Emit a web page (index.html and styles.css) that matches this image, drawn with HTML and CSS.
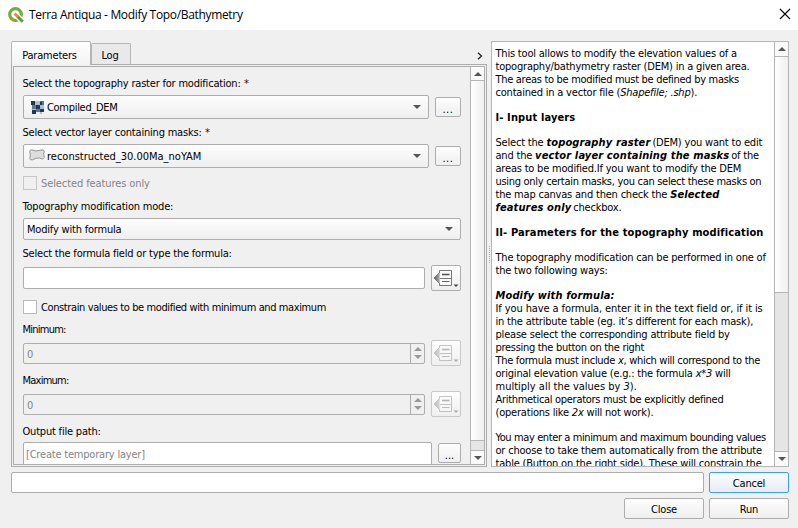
FILE: index.html
```html
<!DOCTYPE html>
<html lang="en">
<head>
<meta charset="utf-8">
<title>Terra Antiqua - Modify Topo/Bathymetry</title>
<link rel="stylesheet" href="styles.css">
</head>
<body>
<svg class="defs" aria-hidden="true">
  <defs>
    <linearGradient id="arrow" x1="0" x2="1"><stop offset="0" stop-color="#666"/><stop offset="1" stop-color="#aaa"/></linearGradient>
    <symbol id="override" viewBox="0 0 30 26">
      <path d="M3 13 L9 7 V19 Z" fill="url(#arrow)" stroke="#666" stroke-width=".8"/>
      <path d="M8.500 8V5.500H20.500V20.500H8.500V18M9 13.500H20.500" fill="#fafafa" stroke="#777"/>
      <path d="M11 9.500H18.500" stroke="#555" stroke-width="1.600"/>
      <path d="M11 16.500H18.500" stroke="#666" stroke-width="1"/>
      <path d="M22.500 19.500H27.500L25 22Z" fill="#444"/>
    </symbol>
  </defs>
</svg>
<header class="titlebar">
  <svg class="logo" viewBox="0 0 16 16">
    <circle cx="7.500" cy="7.500" r="5.800" fill="none" stroke="#76ac3c" stroke-width="3.200"/>
    <path d="M8.500 8.500L14.500 14.500" stroke="#fff" stroke-width="5.500"/>
    <path d="M9.500 9.500L14.800 14.800" stroke="#5f9c35" stroke-width="3"/>
    <path d="M6.500 6.500L9.800 9.800" stroke="#ee8a33" stroke-width="3"/>
  </svg>
  <h1>Terra Antiqua - Modify Topo/Bathymetry</h1>
  <svg class="close" viewBox="0 0 12 12"><path d="M1 1L11 11M11 1L1 11" stroke="#000" stroke-width="1.100"/></svg>
</header>
<main class="panels">
  <section class="left">
    <nav class="tabs"><span class="tab active">Parameters</span><span class="tab">Log</span><svg class="chevron" viewBox="0 0 6 8"><path d="M1 .7L4.500 4L1 7.300" fill="none" stroke="#222" stroke-width="1.300"/></svg></nav>
    <div class="pane"><div class="scroller">
      <form class="form">
        <label class="l1">Select the topography raster for modification: <b>*</b></label>
        <div class="row">
          <div class="combo tall"><svg class="raster" viewBox="0 0 13 13" shape-rendering="crispEdges"><path fill="#a9c0dd" d="M0 0H13V13H0Z"/><path fill="#26374b" d="M0 0H4V4H0ZM5 4H9V8H5ZM9 8H13V11H9ZM1 9H5V13H1Z"/><path fill="#e8eef5" d="M0 4H1V13H0ZM5 11H9V13H5ZM11 11H13V13H11Z"/><path fill="#5c7899" d="M9 0H13V4H9ZM1 4H5V8H1ZM5 8H9V11H5Z"/><path fill="#26374b" d="M9 1H11V4H9Z"/></svg><span class="norm">Compiled_DEM</span><i class="down"></i></div>
          <div class="btn dots">...</div>
        </div>
        <label class="l2">Select vector layer containing masks: <b>*</b></label>
        <div class="row">
          <div class="combo tall"><svg class="polygon" viewBox="0 0 16 12"><path d="M.7 2.500Q.7 .7 3 .9Q7 3 11 1.200Q15 .3 15.300 2Q14 5 15.300 8.500Q14 11 10.500 9Q7 8.500 3.500 10.800Q1 11.500 .8 9.500Q2 6 .7 2.500Z" fill="#ddd" stroke="#969696"/></svg><span class="widest">reconstructed_30.00Ma_noYAM</span><i class="down"></i></div>
          <div class="btn dots">...</div>
        </div>
        <div class="check disabled c1"><i></i><span class="wide">Selected features only</span></div>
        <label class="l3">Topography modification mode:</label>
        <div class="combo"><span>Modify with formula</span><i class="down"></i></div>
        <label class="l4">Select the formula field or type the formula:</label>
        <div class="row tools"><div class="field"></div><div class="btn tool"><svg><use href="#override"/></svg></div></div>
        <div class="check c2"><i></i><span class="tight">Constrain values to be modified with minimum and maximum</span></div>
        <label class="l5 tightest">Minimum:</label>
        <div class="row tools disabled"><div class="spin"><span>0</span><div class="steps"><i class="up"></i><i class="down"></i></div></div><div class="btn tool"><svg><use href="#override"/></svg></div></div>
        <label class="l6 tightest">Maximum:</label>
        <div class="row tools disabled"><div class="spin"><span>0</span><div class="steps"><i class="up"></i><i class="down"></i></div></div><div class="btn tool"><svg><use href="#override"/></svg></div></div>
        <label class="l7">Output file path:</label>
        <div class="row output"><div class="field hint">[Create temporary layer]</div><div class="btn dots small">...</div></div>
      </form>
      <div class="scrollbar"><div class="arrow"><i class="up"></i></div><div class="thumb"></div><div class="groove"></div><div class="arrow"><i class="down"></i></div></div>
    </div></div>
  </section>
  <div class="splitter"><i></i></div>
  <section class="help">
    <article>
      <p>This tool allows to modify the elevation values of a<br>topography/bathymetry raster (DEM) in a given area.<br><span class="norm">The areas to be modified must be defined by masks</span><br>contained in a vector file (<em>Shapefile; .shp</em>).</p>
      <h2>I- Input layers</h2>
      <p>Select the <b><em>topography raster</em></b> (DEM) you want to edit<br>and the <b><em>vector layer containing the masks</em></b> of the<br>areas to be modified.If you want to modify the DEM<br><span class="norm">using only certain masks, you can select these masks on</span><br>the map canvas and then check the <b><em>Selected</em></b><br><b><em>features only</em></b> checkbox.</p>
      <h2>II- Parameters for the topography modification</h2>
      <p>The topography modification can be performed in one of<br>the two following ways:</p>
      <p><b><em>Modify with formula:</em></b><br><span class="wide">If you have a formula, enter it in the text field or, if it is</span><br>in the attribute table (eg. it’s different for each mask),<br>please select the corresponding attribute field by<br><span class="norm">pressing the button on the right</span><br><span class="norm">The formula must include <em>x</em>, which will correspond to the</span><br>original elevation value (e.g.: the formula <em>x*3</em> will<br><span class="widest">multiply all the values by <em>3</em>).</span><br><span class="norm">Arithmetical operators must be explicitly defined</span><br>(operations like <em>2x</em> will not work).</p>
      <p><span class="tight">You may enter a minimum and maximum bounding values</span><br>or choose to take them automatically from the attribute<br>table (Button on the right side). These will constrain the</p>
    </article>
    <div class="scrollbar"><div class="arrow"><i class="up"></i></div><div class="thumb"></div><div class="groove"></div><div class="arrow"><i class="down"></i></div></div>
  </section>
</main>
<footer class="actions">
  <div class="progress"></div><div class="btn focus">Cancel</div>
  <div class="btn closebtn">Close</div><div class="btn">Run</div>
</footer>
</body>
</html>
```

FILE: styles.css
```css
* { box-sizing: border-box; }
body { margin: 0; width: 798px; height: 528px; overflow: hidden; background: #f0f0f0; color: #000; font: 11px/13px "DejaVu Sans Condensed", "DejaVu Sans", sans-serif; font-stretch: condensed; letter-spacing: -0.2px; white-space: nowrap; }
.norm { letter-spacing: -0.3px; }
.tight { letter-spacing: -0.39px; }
.tightest { letter-spacing: -0.75px; }
.wide { letter-spacing: -0.1px; }
.widest { letter-spacing: 0; }
.defs { position: absolute; width: 0; height: 0; }
.titlebar { height: 30px; background: #fff; display: flex; align-items: center; padding: 0 7px 0 8px; }
.logo { width: 16px; height: 16px; margin-top: -1px; }
h1 { margin: 0 0 0 5px; font: 12px/16px "Open Sans", sans-serif; letter-spacing: -0.33px; flex: 1; }
.close { width: 12px; height: 12px; margin-top: -2px; }
.panels { display: flex; height: 442px; padding: 11px 9px 5px 11px; }
.left { width: 476px; display: flex; flex-direction: column; }
.tabs { display: flex; align-items: flex-end; height: 23px; position: relative; z-index: 1; flex: none; }
.tab { border: 1px solid #b5b5b5; border-bottom: 0; border-radius: 2px 2px 0 0; background: #e9e9e9; height: 21px; width: 40px; text-align: center; line-height: 23px; padding-right: 2px; }
.tab.active { height: 24px; width: 80px; margin-bottom: -1px; background: linear-gradient(#fff, #f3f3f3); line-height: 27px; padding-right: 3px; }
.chevron { width: 6px; height: 8px; margin: 0 4px 4px auto; }
.pane { flex: 1; min-height: 0; border: 1px solid #adadad; padding: 1px; }
.scroller { height: 100%; border: 1px solid #adadad; display: flex; overflow: hidden; }
.form { width: 456px; padding: 10px 9px 0 9px; flex: none; }
.form > * { display: flex; }
.row { justify-content: space-between; align-items: center; }
label { height: 13px; white-space: pre; text-indent: -0.5px; }
label b { font-weight: normal; color: #400; margin-left: 1px; }
.l1 { margin-bottom: 5px; }
.l2 { margin: 7px 0 5px; }
.l3 { margin: 10px 0 5px; }
.l4 { margin: 7px 0 5px; }
.l5 { margin: 9px 0 4px; }
.l6, .l7 { margin: 8px 0 4px; }
.combo, .btn, .field, .spin, .progress { border: 1px solid #adadad; border-radius: 2px; background: #fff; }
.combo, .btn { background: linear-gradient(#fdfdfd, #efefef); }
.combo { height: 22px; align-items: center; padding: 0 7px 0 3px; display: flex; }
.combo.tall { height: 24px; width: 406px; }
.combo .down { margin-left: auto; }
.raster { width: 13px; height: 13px; margin: 0 3px 0 4px; }
.polygon { width: 16px; height: 12px; margin: -3px 2px 0 2px; }
.btn { text-align: center; line-height: 21px; }
.dots { width: 26px; height: 20px; line-height: 23px; letter-spacing: 0.6px; }
.dots.small { width: 23px; letter-spacing: 0; }
i.down, i.up { width: 0; height: 0; border: 4px solid transparent; display: block; }
i.down { border-top-color: #555; border-bottom: 0; }
i.up { border-bottom-color: #555; border-top: 0; }
.check { height: 14px; align-items: center; }
.check span { padding-top: 1px; }
.check i { width: 14px; height: 14px; border: 1px solid #b9b9b9; background: #fff; margin-right: 4px; }
.check.disabled { color: #858585; }
.check.disabled i { background: #f0f0f0; border-color: #c6c6c6; }
.c1 { margin-top: 8px; }
.c2 { margin-top: 9px; }
.field { width: 402px; height: 22px; }
.tools { height: 26px; }
.tool { width: 30px; height: 26px; }
.tool svg { display: block; width: 30px; height: 26px; margin: -1px; }
.disabled .tool { border-color: #c8c8c8; }
.disabled .tool svg { opacity: .4; }
.spin { width: 402px; height: 21px; display: flex; background: #f0f0f0; color: #858585; }
.spin span { flex: 1; padding: 4px 3px; }
.steps { width: 14px; border-left: 1px solid #adadad; display: flex; flex-direction: column; align-items: center; justify-content: center; gap: 4px; }
.steps i.down { border-top-color: #999; }
.steps i.up { border-bottom-color: #999; }
.output { align-items: flex-start; }
.field.hint { width: 409px; height: 24px; color: #858585; padding: 5px 2px; }
.output .btn { margin-top: 1px; }
.scrollbar { width: 14px; border-left: 1px solid #b5b5b5; display: flex; flex-direction: column; flex: none; }
.arrow { height: 14px; display: flex; align-items: center; justify-content: center; background: #fafafa; flex: none; }
.thumb { border: 1px solid #b5b5b5; border-width: 1px 0; background: linear-gradient(90deg, #fff, #efefef); flex: none; }
.groove { flex: 1; background: #e5e5e5; border-bottom: 1px solid #b5b5b5; }
.left .thumb { height: 361px; }
.left .arrow { height: 13px; }
.splitter { width: 4px; display: flex; align-items: center; justify-content: center; }
.splitter i { height: 17px; border-left: 1px dotted #aaa; }
.help { flex: 1; border: 1px solid #b5b5b5; background: #fff; display: flex; overflow: hidden; min-width: 0; }
article { flex: 1; min-width: 0; padding: 5px 0 0 3.5px; overflow: hidden; }
article p { margin: 0 0 12px; }
h2 { margin: 0 0 12px; font: inherit; font-weight: bold; letter-spacing: 0.13px; }
article b { letter-spacing: 0.13px; margin-right: -1px; }
.help .thumb { height: 237px; }
.actions { padding: 0 9px 0 11px; display: grid; grid-template-columns: 1fr 80px 80px; column-gap: 5px; row-gap: 5px; grid-auto-rows: 21px; }
.progress { grid-column: 1 / 3; }
.closebtn { grid-column: 2; }
.btn.focus { border-color: #3da3ef; background: linear-gradient(#fbfdff, #e6ecf1); }
```
